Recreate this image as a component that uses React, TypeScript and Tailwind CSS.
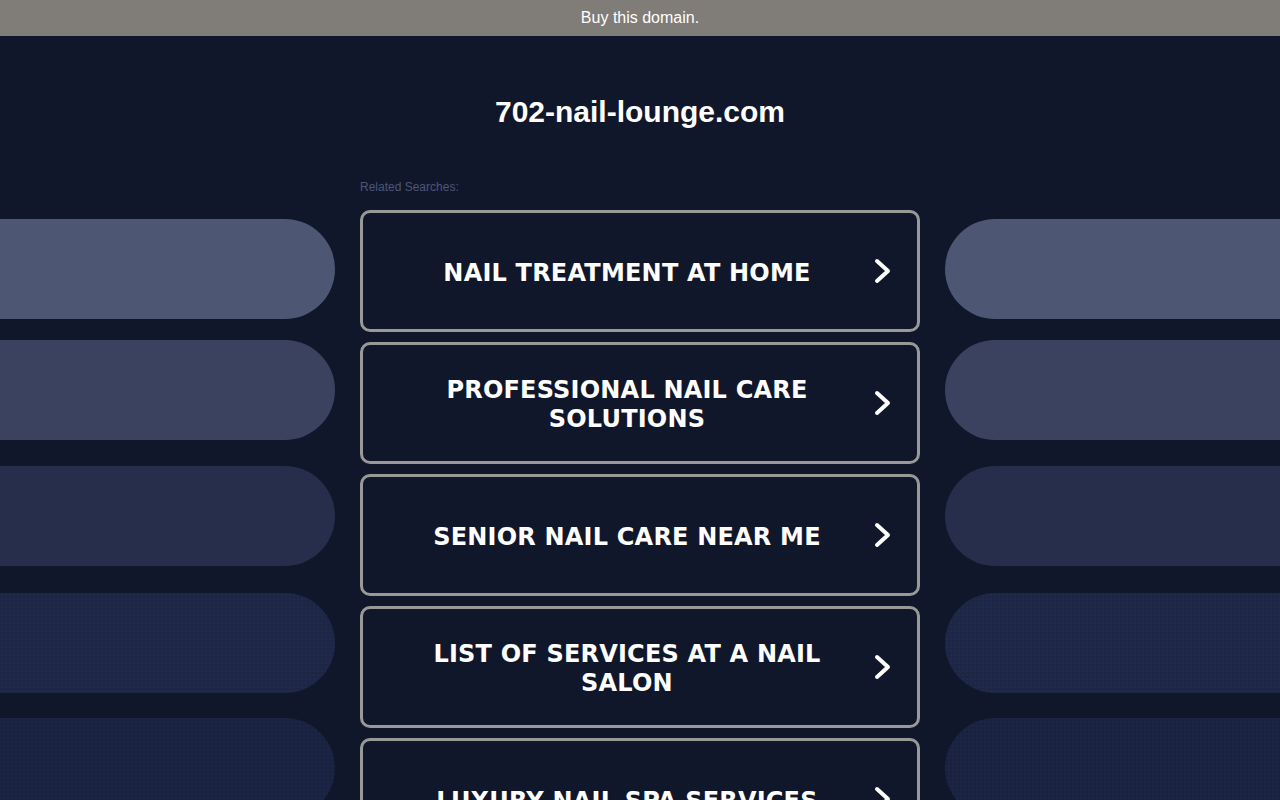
import React from "react";

const items = [
  "NAIL TREATMENT AT HOME",
  "PROFESSIONAL NAIL CARE SOLUTIONS",
  "SENIOR NAIL CARE NEAR ME",
  "LIST OF SERVICES AT A NAIL SALON",
  "LUXURY NAIL SPA SERVICES",
];

const pills = [
  { cls: "mt-0 bg-[#4d5673]" },
  { cls: "mt-[21px] bg-[#3a4260]" },
  { cls: "mt-[26px] bg-[#262e4c]" },
  {
    cls: "mt-[27px] bg-[#1e2645] bg-[radial-gradient(circle,#252f56_0.6px,transparent_0.8px)] bg-[length:4px_4px]",
  },
  {
    cls: "mt-[25px] bg-[#1c2444] bg-[radial-gradient(circle,#141c38_0.6px,transparent_0.8px)] bg-[length:4px_4px]",
  },
];

function Chevron() {
  return (
    <svg width="20" height="28" viewBox="0 0 20 28" className="shrink-0">
      <polyline
        points="4,4 15,14 4,24"
        fill="none"
        stroke="#ffffff"
        strokeWidth="4"
        strokeLinecap="round"
        strokeLinejoin="round"
      />
    </svg>
  );
}

function SideColumn({ side }: { side: "left" | "right" }) {
  return (
    <div className="flex flex-col pt-[183px]">
      {pills.map((p, i) => (
        <div
          key={i}
          className={`h-[100px] shrink-0 ${p.cls} ${
            side === "left" ? "rounded-r-full" : "rounded-l-full"
          }`}
        />
      ))}
    </div>
  );
}

export default function App() {
  return (
    <div className="min-h-screen w-full bg-[#11172b] overflow-hidden font-['Liberation_Sans',Arial,sans-serif]">
      <div className="h-[36px] bg-[#807c78] flex items-center justify-center text-white text-[16px]">
        Buy this domain.
      </div>
      <div className="grid grid-cols-[335px_560px_335px] gap-x-[25px]">
        <SideColumn side="left" />
        <div className="flex flex-col">
          <h1 className="mt-[59px] text-center text-white font-bold text-[30px] leading-[34px]">
            702-nail-lounge.com
          </h1>
          <div className="mt-[51px] text-[12px] leading-[14px] text-[#4c5677]">
            Related Searches:
          </div>
          <div className="mt-[16px] flex flex-col gap-[10px]">
            {items.map((t) => (
              <div
                key={t}
                className="h-[122px] border-[3px] border-[#999999] rounded-[10px] flex items-center"
              >
                <div className="w-[44px] shrink-0" />
                <div className="w-[440px] pt-[4px] text-center text-white font-bold text-[24px] leading-[29px] tracking-[0.2px] font-['DejaVu_Sans',Verdana,sans-serif]">
                  {t}
                </div>
                <div className="w-[26px] shrink-0" />
                <Chevron />
              </div>
            ))}
          </div>
        </div>
        <SideColumn side="right" />
      </div>
    </div>
  );
}
